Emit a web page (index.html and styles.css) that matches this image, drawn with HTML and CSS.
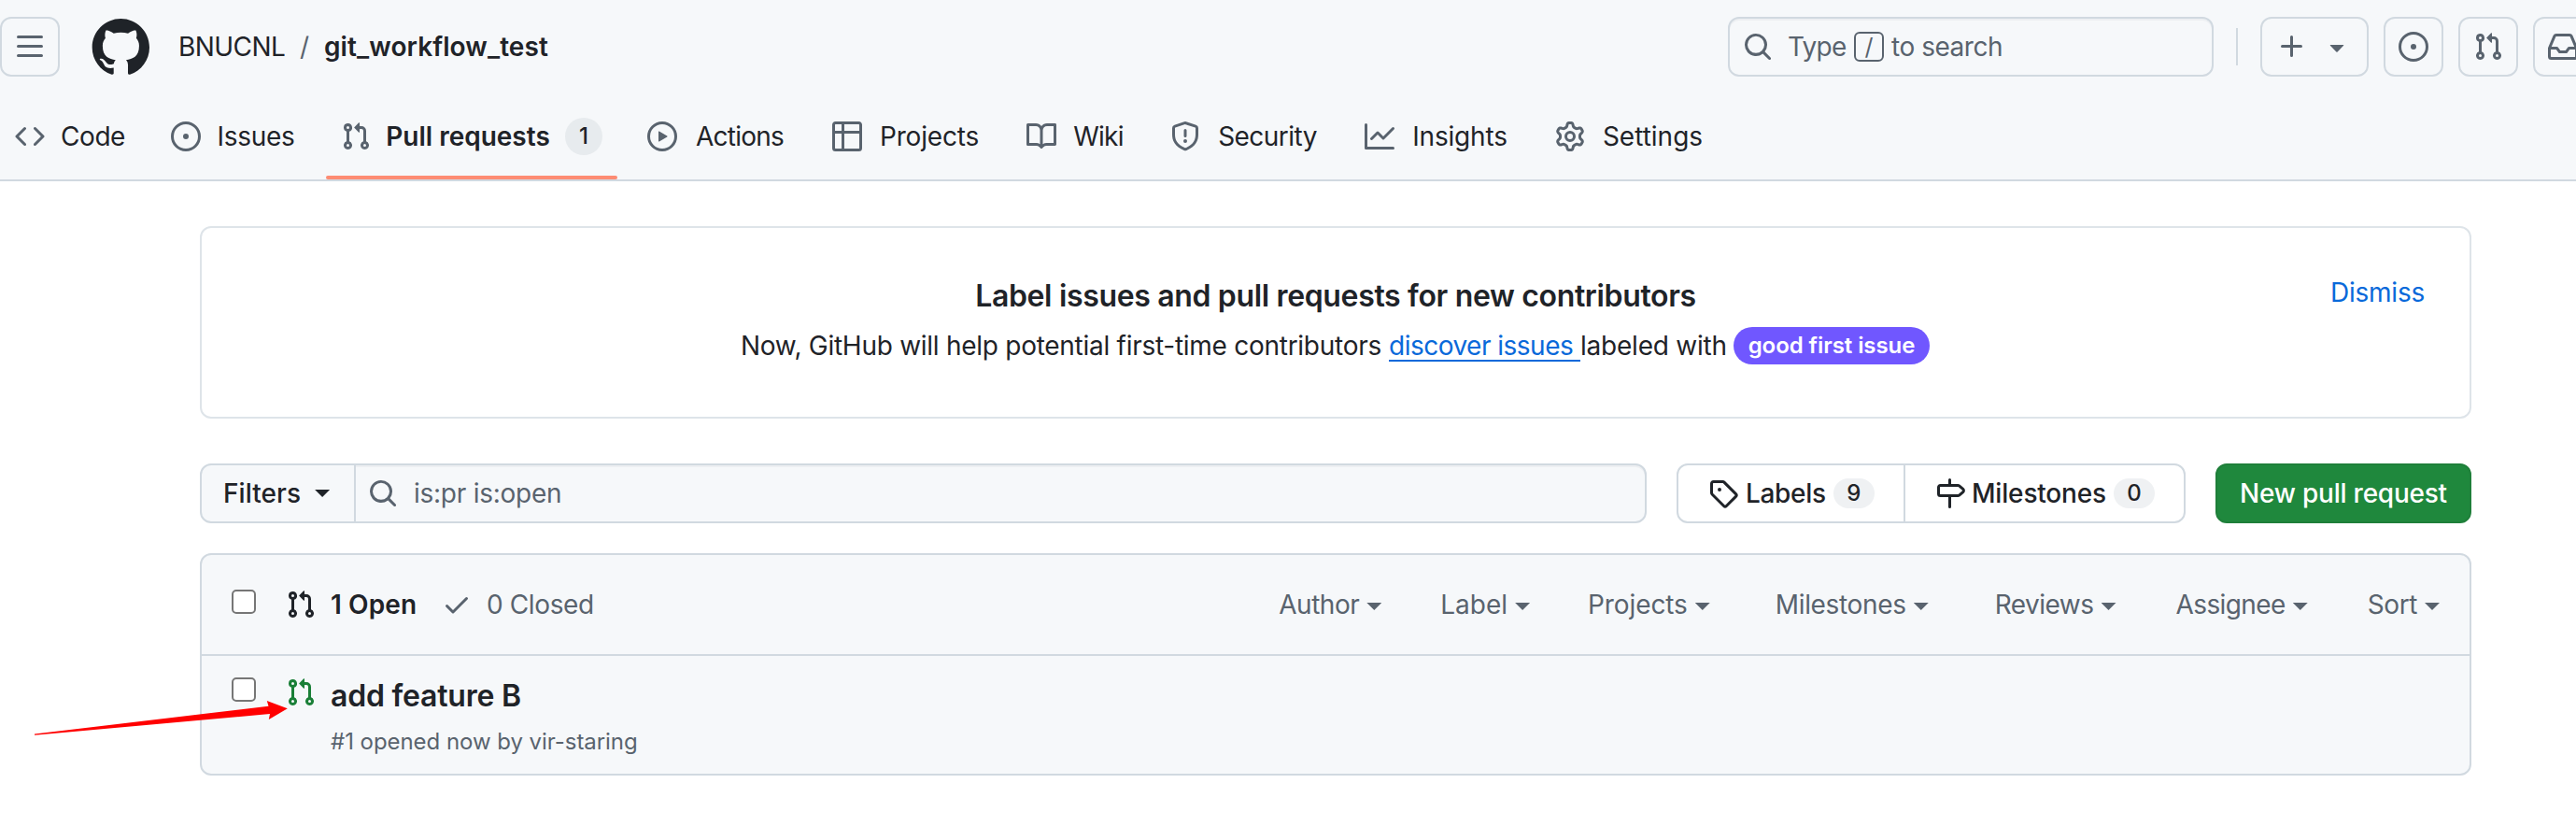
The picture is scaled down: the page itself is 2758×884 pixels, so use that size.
FILE: index.html
```html
<!DOCTYPE html>
<html lang="en">
<head>
<meta charset="utf-8">
<title>Pull requests · BNUCNL/git_workflow_test</title>
<link rel="stylesheet" href="styles.css">
</head>
<body>
<svg class="sprite" aria-hidden="true">
  <symbol id="bars" viewBox="0 0 16 16"><path d="M1 2.75A.75.75 0 0 1 1.75 2h12.5a.75.75 0 0 1 0 1.5H1.75A.75.75 0 0 1 1 2.75Zm0 5A.75.75 0 0 1 1.75 7h12.5a.75.75 0 0 1 0 1.5H1.75A.75.75 0 0 1 1 7.75ZM1.75 12h12.5a.75.75 0 0 1 0 1.5H1.75a.75.75 0 0 1 0-1.5Z"/></symbol>
  <symbol id="mark" viewBox="0 0 24 24"><path d="M12.5.75C6.146.75 1 5.896 1 12.25c0 5.089 3.292 9.387 7.863 10.91.575.101.79-.244.79-.546 0-.273-.014-1.178-.014-2.142-2.889.532-3.636-.704-3.866-1.35-.13-.331-.69-1.352-1.18-1.625-.402-.216-.977-.748-.014-.762.906-.014 1.553.834 1.769 1.179 1.035 1.74 2.688 1.25 3.349.948.1-.747.402-1.25.733-1.538-2.559-.287-5.232-1.279-5.232-5.678 0-1.25.445-2.285 1.178-3.09-.115-.288-.517-1.467.115-3.048 0 0 .963-.302 3.163 1.179.92-.259 1.897-.388 2.875-.388.977 0 1.955.13 2.875.388 2.2-1.495 3.162-1.179 3.162-1.179.633 1.581.23 2.76.115 3.048.733.805 1.179 1.825 1.179 3.09 0 4.413-2.688 5.39-5.247 5.678.417.36.776 1.05.776 2.128 0 1.538-.014 2.774-.014 3.162 0 .302.216.662.79.547C20.709 21.637 24 17.324 24 12.25 24 5.896 18.854.75 12.5.75Z"/></symbol>
  <symbol id="code" viewBox="0 0 16 16"><path d="m11.28 3.22 4.25 4.25a.75.75 0 0 1 0 1.06l-4.25 4.25a.749.749 0 0 1-1.275-.326.749.749 0 0 1 .215-.734L13.94 8l-3.72-3.72a.749.749 0 0 1 .326-1.275.749.749 0 0 1 .734.215Zm-6.56 0a.751.751 0 0 1 1.042.018.751.751 0 0 1 .018 1.042L2.06 8l3.72 3.72a.749.749 0 0 1-.326 1.275.749.749 0 0 1-.734-.215L.47 8.53a.75.75 0 0 1 0-1.06Z"/></symbol>
  <symbol id="issue" viewBox="0 0 16 16"><path d="M8 9.5a1.5 1.5 0 1 0 0-3 1.5 1.5 0 0 0 0 3Z"/><path d="M8 0a8 8 0 1 1 0 16A8 8 0 0 1 8 0ZM1.5 8a6.5 6.5 0 1 0 13 0 6.5 6.5 0 0 0-13 0Z"/></symbol>
  <symbol id="pr" viewBox="0 0 16 16"><path d="M1.5 3.25a2.25 2.25 0 1 1 3 2.122v5.256a2.251 2.251 0 1 1-1.5 0V5.372A2.25 2.25 0 0 1 1.5 3.25Zm5.677-.177L9.573.677A.25.25 0 0 1 10 .854V2.5h1A2.5 2.5 0 0 1 13.5 5v5.628a2.251 2.251 0 1 1-1.5 0V5a1 1 0 0 0-1-1h-1v1.646a.25.25 0 0 1-.427.177L7.177 3.427a.25.25 0 0 1 0-.354ZM3.75 2.5a.75.75 0 1 0 0 1.5.75.75 0 0 0 0-1.5Zm0 9.5a.75.75 0 1 0 0 1.5.75.75 0 0 0 0-1.5Zm8.25.75a.75.75 0 1 0 1.5 0 .75.75 0 0 0-1.5 0Z"/></symbol>
  <symbol id="play" viewBox="0 0 16 16"><path d="M8 0a8 8 0 1 1 0 16A8 8 0 0 1 8 0ZM1.5 8a6.5 6.5 0 1 0 13 0 6.5 6.5 0 0 0-13 0Zm4.879-2.773 4.264 2.559a.25.25 0 0 1 0 .428l-4.264 2.559A.25.25 0 0 1 6 10.559V5.442a.25.25 0 0 1 .379-.215Z"/></symbol>
  <symbol id="table" viewBox="0 0 16 16"><path d="M0 1.75C0 .784.784 0 1.75 0h12.5C15.216 0 16 .784 16 1.75v12.5A1.75 1.75 0 0 1 14.25 16H1.75A1.75 1.75 0 0 1 0 14.25ZM6.5 6.5v8h7.75a.25.25 0 0 0 .25-.25V6.5Zm8-1.5V1.75a.25.25 0 0 0-.25-.25H6.5V5Zm-13 1.5v7.75c0 .138.112.25.25.25H5v-8ZM5 5V1.5H1.75a.25.25 0 0 0-.25.25V5Z"/></symbol>
  <symbol id="book" viewBox="0 0 16 16"><path d="M0 1.75A.75.75 0 0 1 .75 1h4.253c1.227 0 2.317.59 3 1.501A3.743 3.743 0 0 1 11.006 1h4.245a.75.75 0 0 1 .75.75v10.5a.75.75 0 0 1-.75.75h-4.507a2.25 2.25 0 0 0-1.591.659l-.622.621a.75.75 0 0 1-1.06 0l-.622-.621A2.25 2.25 0 0 0 5.258 13H.75a.75.75 0 0 1-.75-.75Zm7.251 10.324.004-5.073-.002-2.253A2.25 2.25 0 0 0 5.003 2.5H1.5v9h3.757a3.75 3.75 0 0 1 1.994.574ZM8.755 4.75l-.004 7.322a3.752 3.752 0 0 1 1.992-.572H14.5v-9h-3.495a2.25 2.25 0 0 0-2.25 2.25Z"/></symbol>
  <symbol id="shield" viewBox="0 0 16 16"><path d="M7.467.133a1.748 1.748 0 0 1 1.066 0l5.25 1.68A1.75 1.75 0 0 1 15 3.48V7c0 1.566-.32 3.182-1.303 4.682-.983 1.498-2.585 2.813-5.032 3.855a1.697 1.697 0 0 1-1.33 0c-2.447-1.042-4.049-2.357-5.032-3.855C1.32 10.182 1 8.566 1 7V3.48a1.75 1.75 0 0 1 1.217-1.667Zm.61 1.429a.25.25 0 0 0-.153 0l-5.25 1.68a.25.25 0 0 0-.174.238V7c0 1.358.275 2.666 1.057 3.86.784 1.194 2.121 2.34 4.366 3.297a.196.196 0 0 0 .154 0c2.245-.956 3.582-2.104 4.366-3.298C13.225 9.666 13.5 8.36 13.5 7V3.48a.251.251 0 0 0-.174-.237l-5.25-1.68ZM8.75 4.75v3a.75.75 0 0 1-1.5 0v-3a.75.75 0 0 1 1.5 0ZM9 10.5a1 1 0 1 1-2 0 1 1 0 0 1 2 0Z"/></symbol>
  <symbol id="graph" viewBox="0 0 16 16"><path d="M1.5 1.75V13.5h13.75a.75.75 0 0 1 0 1.5H.75a.75.75 0 0 1-.75-.75V1.75a.75.75 0 0 1 1.5 0Zm14.28 2.53-5.25 5.25a.75.75 0 0 1-1.06 0L7 7.06 4.28 9.78a.751.751 0 0 1-1.042-.018.751.751 0 0 1-.018-1.042l3.25-3.25a.75.75 0 0 1 1.06 0L10 7.94l4.72-4.72a.751.751 0 0 1 1.042.018.751.751 0 0 1 .018 1.042Z"/></symbol>
  <symbol id="gear" viewBox="0 0 16 16"><path d="M8 0a8.2 8.2 0 0 1 .701.031C9.444.095 9.99.645 10.16 1.29l.288 1.107c.018.066.079.158.212.224.231.114.454.243.668.386.123.082.233.09.299.071l1.103-.303c.644-.176 1.392.021 1.82.63.27.385.506.792.704 1.218.315.675.111 1.422-.364 1.891l-.814.806c-.049.048-.098.147-.088.294.016.257.016.515 0 .772-.01.147.038.246.088.294l.814.806c.475.469.679 1.216.364 1.891a7.977 7.977 0 0 1-.704 1.217c-.428.61-1.176.807-1.82.63l-1.102-.302c-.067-.019-.177-.011-.3.071a5.909 5.909 0 0 1-.668.386c-.133.066-.194.158-.211.224l-.29 1.106c-.168.646-.715 1.196-1.458 1.26a8.006 8.006 0 0 1-1.402 0c-.743-.064-1.289-.614-1.458-1.26l-.289-1.106c-.018-.066-.079-.158-.212-.224a5.738 5.738 0 0 1-.668-.386c-.123-.082-.233-.09-.299-.071l-1.103.303c-.644.176-1.392-.021-1.82-.63a8.12 8.12 0 0 1-.704-1.218c-.315-.675-.111-1.422.363-1.891l.815-.806c.05-.048.098-.147.088-.294a6.214 6.214 0 0 1 0-.772c.01-.147-.038-.246-.088-.294l-.815-.806C.635 6.045.431 5.298.746 4.623a7.92 7.92 0 0 1 .704-1.217c.428-.61 1.176-.807 1.82-.63l1.102.302c.067.019.177.011.3-.071.214-.143.437-.272.668-.386.133-.066.194-.158.211-.224l.29-1.106C6.009.645 6.556.095 7.299.03 7.53.01 7.764 0 8 0Zm-.571 1.525c-.036.003-.108.036-.137.146l-.289 1.105c-.147.561-.549.967-.998 1.189-.173.086-.34.183-.5.29-.417.278-.97.423-1.529.27l-1.103-.303c-.109-.03-.175.016-.195.045-.22.312-.412.644-.573.99-.014.031-.021.11.059.19l.815.806c.411.406.562.957.53 1.456a4.709 4.709 0 0 0 0 .582c.032.499-.119 1.05-.53 1.456l-.815.806c-.081.08-.073.159-.059.19.162.346.353.677.573.989.02.03.085.076.195.046l1.102-.303c.56-.153 1.113-.008 1.53.27.161.107.328.204.501.29.447.222.85.629.997 1.189l.289 1.105c.029.109.101.143.137.146a6.6 6.6 0 0 0 1.142 0c.036-.003.108-.036.137-.146l.289-1.105c.147-.561.549-.967.998-1.189.173-.086.34-.183.5-.29.417-.278.97-.423 1.529-.27l1.103.303c.109.029.175-.016.195-.045.22-.313.411-.644.573-.99.014-.031.021-.11-.059-.19l-.815-.806c-.411-.406-.562-.957-.53-1.456a4.709 4.709 0 0 0 0-.582c-.032-.499.119-1.05.53-1.456l.815-.806c.081-.08.073-.159.059-.19a6.464 6.464 0 0 0-.573-.989c-.02-.03-.085-.076-.195-.046l-1.102.303c-.56.153-1.113.008-1.53-.27a4.44 4.44 0 0 0-.501-.29c-.447-.222-.85-.629-.997-1.189l-.289-1.105c-.029-.11-.101-.143-.137-.146a6.6 6.6 0 0 0-1.142 0ZM11 8a3 3 0 1 1-6 0 3 3 0 0 1 6 0ZM9.5 8a1.5 1.5 0 1 0-3.001.001A1.5 1.5 0 0 0 9.5 8Z"/></symbol>
  <symbol id="search" viewBox="0 0 16 16"><path d="M10.68 11.74a6 6 0 0 1-7.922-8.982 6 6 0 0 1 8.982 7.922l3.04 3.04a.749.749 0 0 1-.326 1.275.749.749 0 0 1-.734-.215ZM11.5 7a4.499 4.499 0 1 0-8.997 0A4.499 4.499 0 0 0 11.5 7Z"/></symbol>
  <symbol id="plus" viewBox="0 0 16 16"><path d="M7.75 2a.75.75 0 0 1 .75.75V7h4.25a.75.75 0 0 1 0 1.5H8.5v4.25a.75.75 0 0 1-1.5 0V8.5H2.75a.75.75 0 0 1 0-1.5H7V2.75A.75.75 0 0 1 7.75 2Z"/></symbol>
  <symbol id="down" viewBox="0 0 16 16"><path d="m4.427 7.427 3.396 3.396a.25.25 0 0 0 .354 0l3.396-3.396A.25.25 0 0 0 11.396 7H4.604a.25.25 0 0 0-.177.427Z"/></symbol>
  <symbol id="inbox" viewBox="0 0 16 16"><path d="M2.8 2.06A1.75 1.75 0 0 1 4.41 1h7.18c.7 0 1.333.417 1.61 1.06l2.74 6.395c.04.093.06.194.06.295v4.5A1.75 1.75 0 0 1 14.25 15H1.75A1.75 1.75 0 0 1 0 13.25v-4.5c0-.101.02-.202.06-.295Zm1.61.44a.25.25 0 0 0-.23.152L1.887 8H4.75a.75.75 0 0 1 .6.3L6.625 10h2.75l1.275-1.7a.75.75 0 0 1 .6-.3h2.863L11.82 2.652a.25.25 0 0 0-.23-.152Zm10.09 7h-2.875l-1.275 1.7a.75.75 0 0 1-.6.3h-3.5a.75.75 0 0 1-.6-.3L4.375 9.5H1.5v3.75c0 .138.112.25.25.25h12.5a.25.25 0 0 0 .25-.25Z"/></symbol>
  <symbol id="tag" viewBox="0 0 16 16"><path d="M1 7.775V2.75C1 1.784 1.784 1 2.75 1h5.025c.464 0 .91.184 1.238.513l6.25 6.25a1.75 1.75 0 0 1 0 2.474l-5.026 5.026a1.75 1.75 0 0 1-2.474 0l-6.25-6.25A1.752 1.752 0 0 1 1 7.775Zm1.5 0c0 .066.026.13.073.177l6.25 6.25a.25.25 0 0 0 .354 0l5.025-5.025a.25.25 0 0 0 0-.354l-6.25-6.25a.25.25 0 0 0-.177-.073H2.75a.25.25 0 0 0-.25.25ZM6 5a1 1 0 1 1 0 2 1 1 0 0 1 0-2Z"/></symbol>
  <symbol id="milestone" viewBox="0 0 16 16"><path d="M7.75 0a.75.75 0 0 1 .75.75V3h3.634c.414 0 .814.147 1.13.414l2.07 1.75a1.75 1.75 0 0 1 0 2.672l-2.07 1.75a1.75 1.75 0 0 1-1.13.414H8.5v5.25a.75.75 0 0 1-1.5 0V10H2.75A1.75 1.75 0 0 1 1 8.25v-3.5C1 3.784 1.784 3 2.75 3H7V.75A.75.75 0 0 1 7.75 0Zm4.384 8.5a.25.25 0 0 0 .161-.06l2.07-1.75a.248.248 0 0 0 0-.38l-2.07-1.75a.25.25 0 0 0-.161-.06H2.75a.25.25 0 0 0-.25.25v3.5c0 .138.112.25.25.25h9.384Z"/></symbol>
  <symbol id="check" viewBox="0 0 16 16"><path d="M13.78 4.22a.75.75 0 0 1 0 1.06l-7.25 7.25a.75.75 0 0 1-1.06 0L2.22 9.28a.751.751 0 0 1 .018-1.042.751.751 0 0 1 1.042-.018L6 10.94l6.72-6.72a.75.75 0 0 1 1.06 0Z"/></symbol>
</svg>

<header class="header">
  <div class="topbar">
    <button class="btn square menu"><svg class="icon"><use href="#bars"/></svg></button>
    <svg class="logo"><use href="#mark"/></svg>
    <span class="owner">BNUCNL</span>
    <span class="slash">/</span>
    <span class="repo">git_workflow_test</span>
    <div class="search">
      <svg class="icon"><use href="#search"/></svg>
      <span class="type">Type</span><kbd>/</kbd><span class="tosearch">to search</span>
    </div>
    <span class="divider"></span>
    <button class="btn create"><svg class="icon"><use href="#plus"/></svg><svg class="icon"><use href="#down"/></svg></button>
    <button class="btn square"><svg class="icon"><use href="#issue"/></svg></button>
    <button class="btn square"><svg class="icon"><use href="#pr"/></svg></button>
    <button class="btn square"><svg class="icon"><use href="#inbox"/></svg></button>
  </div>
  <nav class="tabs">
    <a class="tab"><svg class="icon"><use href="#code"/></svg><span class="label t-code">Code</span></a>
    <a class="tab"><svg class="icon"><use href="#issue"/></svg><span class="label t-issues">Issues</span></a>
    <a class="tab active"><svg class="icon"><use href="#pr"/></svg><span class="label t-pulls">Pull requests</span><span class="counter big">1</span></a>
    <a class="tab"><svg class="icon"><use href="#play"/></svg><span class="label t-actions">Actions</span></a>
    <a class="tab"><svg class="icon"><use href="#table"/></svg><span class="label t-projects">Projects</span></a>
    <a class="tab"><svg class="icon"><use href="#book"/></svg><span class="label t-wiki">Wiki</span></a>
    <a class="tab"><svg class="icon"><use href="#shield"/></svg><span class="label t-security">Security</span></a>
    <a class="tab"><svg class="icon"><use href="#graph"/></svg><span class="label t-insights">Insights</span></a>
    <a class="tab"><svg class="icon"><use href="#gear"/></svg><span class="label t-settings">Settings</span></a>
  </nav>
</header>

<main class="main">
  <section class="notice">
    <h2 class="notice-title">Label issues and pull requests for new contributors</h2>
    <p class="notice-text"><span class="lead">Now, GitHub will help potential first-time contributors</span><a class="link">discover issues</a><span class="tail">labeled with</span><span class="pill">good first issue</span></p>
    <a class="dismiss">Dismiss</a>
  </section>

  <section class="toolbar">
    <div class="query">
      <button class="filters">Filters<i class="caret"></i></button>
      <div class="query-input"><svg class="icon"><use href="#search"/></svg>is:pr is:open</div>
    </div>
    <div class="group">
      <a class="g-labels"><svg class="icon"><use href="#tag"/></svg><span>Labels</span><span class="counter">9</span></a>
      <a class="g-miles"><svg class="icon"><use href="#milestone"/></svg><span>Milestones</span><span class="counter">0</span></a>
    </div>
    <button class="new">New pull request</button>
  </section>

  <section class="list">
    <div class="list-head">
      <span class="box"></span>
      <svg class="icon ink"><use href="#pr"/></svg>
      <span class="open">1 Open</span>
      <svg class="icon"><use href="#check"/></svg>
      <span class="closed">0 Closed</span>
      <div class="menus">
        <span class="m m-author">Author<i class="caret"></i></span>
        <span class="m m-label">Label<i class="caret"></i></span>
        <span class="m m-projects">Projects<i class="caret"></i></span>
        <span class="m m-milestones">Milestones<i class="caret"></i></span>
        <span class="m m-reviews">Reviews<i class="caret"></i></span>
        <span class="m m-assignee">Assignee<i class="caret"></i></span>
        <span class="m m-sort">Sort<i class="caret"></i></span>
      </div>
    </div>
    <div class="row">
      <span class="box"></span>
      <svg class="icon green"><use href="#pr"/></svg>
      <div class="row-text">
        <a class="row-title">add feature B</a>
        <span class="row-meta">#1 opened now by vir-staring</span>
      </div>
    </div>
  </section>
</main>
<svg class="arrow" viewBox="37 749 271 38"><path d="M37 785.5 287.5 755.7 285.8 750 307.8 758.3 287.8 770 289 764 37 786.8Z"/></svg>
</body>
</html>
```
FILE: styles.css
```css
* { box-sizing: border-box; }
body {
  margin: 0;
  width: 2758px;
  height: 884px;
  overflow: hidden;
  background: #fff;
  color: #1f2328;
  font: 400 28px/42px Inter, "Liberation Sans", sans-serif;
  white-space: nowrap;
}
button { font: inherit; color: inherit; padding: 0; margin: 0; }
.sprite { display: none; }
.icon { display: block; flex: none; width: 32px; height: 32px; fill: #59636e; }

/* Header */
.header { height: 194px; background: #f6f8fa; border-bottom: 2px solid #d1d9e0; }
.topbar { display: flex; align-items: center; height: 100px; }
.btn {
  display: flex; align-items: center; justify-content: center; flex: none;
  height: 64px; border: 2px solid #d1d9e0; border-radius: 12px; background: none;
}
.square { width: 64px; margin-left: 16px; }
.menu { margin-left: 0; }
.logo { flex: none; width: 64px; height: 64px; margin-left: 32px; fill: #1f2328; }
.owner { width: 130px; margin-left: 31px; letter-spacing: -.56px; }
.slash { width: 26px; color: #59636e; }
.repo { width: 300px; font-weight: 600; letter-spacing: .09px; }
.search {
  display: flex; align-items: center; flex: none;
  width: 520px; height: 64px; margin-left: auto; padding-left: 14px;
  border: 2px solid #d1d9e0; border-radius: 12px;
  box-shadow: inset 0 2px 0 rgba(31, 35, 40, .04);
  color: #59636e;
}
.type { margin-left: 16px; width: 71px; letter-spacing: -.74px; }
.tosearch { letter-spacing: -.47px; }
kbd {
  display: flex; align-items: center; justify-content: center;
  width: 32px; height: 32px; margin-right: 8px;
  border: 2px solid #59636e; border-radius: 6px; font: inherit; font-size: 25px;
}
.divider { flex: none; width: 2px; height: 40px; margin: 0 24px; background: #d1d9e0; }
.create { width: 116px; justify-content: flex-start; padding-left: 16px; gap: 16px; }
.topbar .square:last-child { margin-right: -18px; }

/* Repository tabs */
.tabs { display: flex; height: 92px; gap: 16px; }
.tab { position: relative; display: flex; align-items: center; padding: 0 16px; gap: 16px; }
.label { text-align: center; }
.active { font-weight: 600; }
.active::after {
  content: ""; position: absolute; left: 0; right: 0; bottom: 0;
  height: 4px; border-radius: 12px; background: #fd8c73;
}
.t-code { width: 71px; letter-spacing: -.46px; }
.t-issues { width: 86px; letter-spacing: -.29px; }
.t-pulls { width: 176px; }
.t-actions { width: 102px; letter-spacing: -.76px; }
.t-projects { width: 112px; letter-spacing: -.18px; }
.t-wiki { width: 58px; letter-spacing: -.75px; }
.t-security { width: 112px; letter-spacing: -.54px; }
.t-insights { width: 108px; letter-spacing: -.18px; }
.t-settings { width: 113px; }
.counter {
  display: flex; align-items: center; justify-content: center;
  height: 32px; width: 44px; border-radius: 32px; background: #eff1f3;
  font-size: 24px; font-weight: 500; letter-spacing: 0;
}
.big { width: 40px; height: 40px; background: #e7ebee; }

/* Notice */
.main { display: flex; flex-direction: column; padding: 48px 112px 0 214px; }
.notice {
  position: relative; height: 206px; padding-top: 51px;
  border: 2px solid #dee4e9; border-radius: 12px; text-align: center;
}
.notice-title { margin: 0; font-size: 32px; line-height: 44px; font-weight: 600; letter-spacing: -.34px; }
.notice-text { display: flex; align-items: center; height: 44px; margin: 9px 0 0 577px; text-align: left; }
.lead { width: 694px; letter-spacing: -.27px; }
.link {
  width: 205px; height: 42px; color: #0969da; letter-spacing: -.51px;
  box-shadow: inset 0 -4px 0 #fff, inset 0 -6px 0 #0969da;
}
.tail { width: 164px; letter-spacing: -.22px; }
.pill {
  display: flex; align-items: center; justify-content: center;
  width: 210px; height: 40px; border-radius: 40px;
  background: #7057ff; color: #fff; font-size: 24px; font-weight: 600; letter-spacing: -.07px;
}
.dismiss { position: absolute; right: 48px; top: 48px; color: #0969da; letter-spacing: -.23px; }

/* Toolbar */
.toolbar { display: flex; height: 64px; margin-top: 48px; }
.query { display: flex; width: 1549px; border: 2px solid #d1d9e0; border-radius: 12px; background: #f6f8fa; }
.filters {
  display: flex; align-items: center; gap: 15px; width: 165px; padding-left: 23px;
  border: 0; border-right: 2px solid #d1d9e0; background: none; font-weight: 500; letter-spacing: .07px;
}
.caret { width: 16px; height: 8px; background: currentColor; clip-path: polygon(0 0, 100% 0, 50% 100%); }
.query-input {
  display: flex; align-items: center; gap: 17px; flex: 1; padding-left: 13px;
  color: #59636e; letter-spacing: -.26px;
  box-shadow: inset 0 2px 0 rgba(31, 35, 40, .04); border-radius: 0 10px 10px 0;
}
.group { display: flex; width: 545px; margin-left: 32px; border: 2px solid #d1d9e0; border-radius: 12px; font-weight: 500; }
.group a { display: flex; align-items: center; gap: 8px; }
.group .icon { fill: #1f2328; }
.g-labels { width: 243px; padding-left: 32px; border-right: 2px solid #d1d9e0; letter-spacing: -.31px; }
.g-miles { padding-left: 32px; letter-spacing: -.18px; }
.g-miles .icon { margin-right: -1px; }
.new {
  width: 274px; margin-left: 32px; border: 2px solid #1f7f3a; border-radius: 12px;
  background: #1f883d; color: #fff; font-weight: 500; letter-spacing: -.23px;
}

/* Pull request list */
.list { height: 238px; margin-top: 32px; border: 2px solid #d1d9e0; border-radius: 12px; background: #f6f8fa; }
.list-head { display: flex; align-items: center; height: 108px; padding: 0 32px; border-bottom: 2px solid #d1d9e0; color: #59636e; }
.box { flex: none; width: 26px; height: 26px; border: 2px solid #767676; border-radius: 5px; background: #fff; }
.list-head .box { margin-bottom: 6px; }
.box + .icon { margin-left: 32px; }
.ink { fill: #1f2328; }
.open { width: 119px; margin-left: 16px; font-weight: 600; letter-spacing: .11px; color: #1f2328; }
.closed { margin-left: 16px; letter-spacing: -.38px; }
.menus { display: flex; gap: 64px; margin-left: auto; }
.m { display: flex; align-items: center; gap: 8px; }
.m .caret { margin-top: 4px; }
.m-author { letter-spacing: -.48px; }
.m-label { margin-left: -1px; }
.m-projects { margin-left: -2px; letter-spacing: -.11px; }
.m-milestones { margin-left: 6px; letter-spacing: -.33px; }
.m-reviews { margin-left: 7px; letter-spacing: -.52px; }
.m-assignee { letter-spacing: -.6px; }
.m-sort { letter-spacing: -.41px; }
.row { display: flex; padding: 0 32px; }
.row .box { margin-top: 23px; }
.green { fill: #1a7f37; margin-top: 23px; }
.row-text { display: flex; flex-direction: column; margin-left: 16px; }
.row-title { margin-top: 21px; font-size: 32px; line-height: 44px; font-weight: 600; letter-spacing: -.21px; }
.row-meta { margin-top: 9px; font-size: 24px; line-height: 36px; letter-spacing: -.05px; color: #59636e; }

/* Annotation arrow */
.arrow { position: absolute; left: 37px; top: 749px; width: 271px; height: 38px; fill: #f00; }
```
